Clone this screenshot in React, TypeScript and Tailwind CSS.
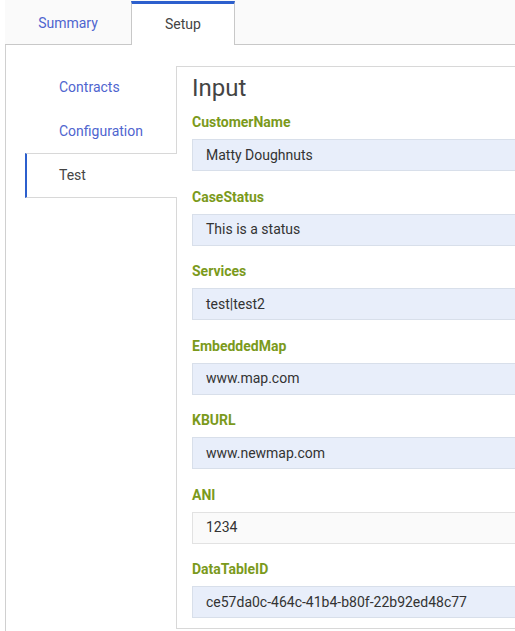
import React from "react";

const fields: { label: string; value: string; plain?: boolean }[] = [
  { label: "CustomerName", value: "Matty Doughnuts" },
  { label: "CaseStatus", value: "This is a status" },
  { label: "Services", value: "test|test2" },
  { label: "EmbeddedMap", value: "www.map.com" },
  { label: "KBURL", value: "www.newmap.com" },
  { label: "ANI", value: "1234", plain: true },
  { label: "DataTableID", value: "ce57da0c-464c-41b4-b80f-22b92ed48c77" },
];

export default function App() {
  return (
    <div className="w-[515px] h-[631px] overflow-hidden bg-white pl-[5px] font-['Roboto',sans-serif]">
      <div className="w-[560px]">
        <div className="flex h-[45px] border-b border-[#c8c8c8] bg-[#fafafa]">
          <div className="w-[126px] pt-[3px] flex items-center justify-center text-[14px] text-[#4f65cf]">
            Summary
          </div>
          <div className="w-[104px] h-[44px] mt-px self-start bg-white border-x border-[#c8c8c8] border-t-[3px] border-t-[#2c5fcd] flex items-center justify-center text-[14px] text-[#444]">
            Setup
          </div>
        </div>
        <div className="flex border-l border-[#d0d0d0] pl-[19px] pt-[21px] pb-[3px]">
          <div className="w-[151px] shrink-0 relative z-10 text-[14px]">
            <div className="h-[43px] flex items-center pl-[34px] text-[#4f65cf]">Contracts</div>
            <div className="h-[44px] flex items-center pl-[34px] text-[#4f65cf]">Configuration</div>
            <div className="h-[45px] mr-[-1px] bg-white flex items-center pl-[32px] border-l-2 border-l-[#2c5fcd] border-y border-y-[#d8d8d8] text-[#444]">
              Test
            </div>
          </div>
          <div className="w-[360px] shrink-0 border border-[#d8d8d8] pl-[15px] pt-[7px] pb-[10px]">
            <div className="text-[24px] leading-[28px] text-[#444]">Input</div>
            <div className="mt-[10px]">
              {fields.map((f, i) => (
                <div key={f.label} className={i === 0 ? "" : "mt-[15.5px]"}>
                  <div className="h-[20px] leading-[20px] text-[14px] font-bold text-[#7b9a1c]">{f.label}</div>
                  <div
                    className={
                      "mt-[7px] h-[32px] flex items-center pl-[13px] text-[14px] text-[#333] border " +
                      (f.plain ? "bg-[#fafafa] border-[#e2e2e2]" : "bg-[#e8eefa] border-[#d8dfea]")
                    }
                  >
                    {f.value}
                  </div>
                </div>
              ))}
            </div>
          </div>
        </div>
      </div>
    </div>
  );
}
